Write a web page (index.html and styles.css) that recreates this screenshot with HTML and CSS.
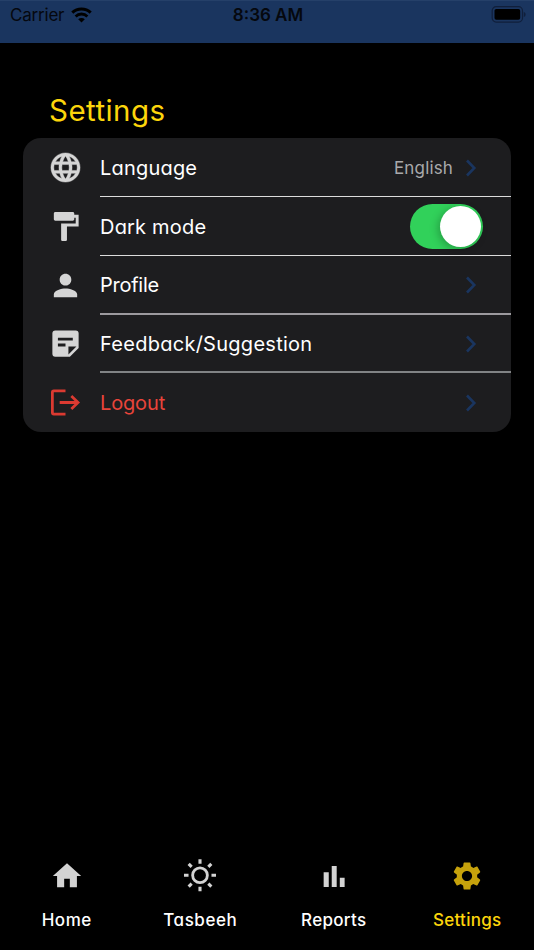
FILE: index.html
```html
<!DOCTYPE html>
<html lang="en">
<head>
    <meta charset="UTF-8">
    <meta name="viewport" content="width=device-width, initial-scale=1.0">
    <title>Settings</title>
    <link rel="stylesheet" href="styles.css">
</head>
<body>
    <header class="status-bar">
        <div class="carrier">
            <span class="carrier-name">Carrier</span>
            <svg class="wifi" viewBox="0 0 21 16">
                <path d="M1.3 5.7a13.2 13.2 0 0 1 18.4 0" fill="none" stroke="#000" stroke-width="3"/>
                <path d="M4.6 9.4a8.4 8.4 0 0 1 11.8 0" fill="none" stroke="#000" stroke-width="2.8"/>
                <path d="M10.5 15.6 7.2 12.3a4.7 4.7 0 0 1 6.6 0z"/>
            </svg>
        </div>
        <div class="time">8:36 AM</div>
        <svg class="battery" viewBox="0 0 35 17">
            <rect x="1.2" y=".7" width="30.3" height="15.4" rx="4" fill="none" stroke="#101f3b" stroke-width="1.2"/>
            <rect x="3.500" y="3" width="25.700" height="10.800" rx="1.800"/>
            <path d="M32.800 6v5c1.400-.4 1.800-1.400 1.800-2.500s-.4-2.100-1.800-2.500z" fill="#101f3b"/>
        </svg>
    </header>

    <main class="content">
        <h1>Settings</h1>
        <div class="card">
            <div class="row">
                <svg class="icon" viewBox="0 0 24 24"><path d="M11.99 2C6.470 2 2 6.480 2 12s4.470 10 9.990 10C17.520 22 22 17.520 22 12S17.520 2 11.990 2zm6.930 6h-2.950c-.32-1.250-.78-2.450-1.380-3.560 1.840.63 3.370 1.910 4.330 3.560zM12 4.040c.83 1.200 1.480 2.530 1.910 3.960h-3.820c.43-1.430 1.080-2.760 1.910-3.960zM4.260 14C4.100 13.360 4 12.690 4 12s.1-1.360.26-2h3.380c-.08.66-.14 1.320-.14 2s.06 1.340.14 2H4.260zm.82 2h2.950c.32 1.250.78 2.450 1.380 3.560-1.840-.63-3.370-1.900-4.330-3.560zm2.950-8H5.080c.96-1.660 2.490-2.930 4.330-3.560C8.810 5.550 8.350 6.750 8.030 8zM12 19.960c-.83-1.200-1.480-2.530-1.910-3.960h3.820c-.43 1.430-1.080 2.760-1.910 3.960zM14.340 14H9.660c-.09-.66-.16-1.320-.16-2s.07-1.350.16-2h4.680c.09.65.16 1.320.16 2s-.07 1.340-.16 2zm.25 5.560c.6-1.110 1.060-2.310 1.380-3.560h2.950c-.96 1.650-2.490 2.930-4.330 3.560zM16.360 14c.08-.66.14-1.320.14-2s-.06-1.340-.14-2h3.380c.16.64.26 1.310.26 2s-.1 1.360-.26 2h-3.380z" stroke="#d5d5d5" stroke-width=".3"/></svg>
                <div class="row-body">
                    <span class="label language">Language</span>
                    <span class="value">English</span>
                    <svg class="chevron" viewBox="0 0 12 18"><path d="m2 1.500 7.300 7.500-7.300 7.500"/></svg>
                </div>
            </div>
            <div class="row">
                <svg class="icon" viewBox="0 0 24 24"><path d="M18 4V3c0-.55-.45-1-1-1H5c-.55 0-1 .45-1 1v4c0 .55.45 1 1 1h12c.55 0 1-.45 1-1V6h1v4H9v11c0 .55.45 1 1 1h2c.55 0 1-.45 1-1v-9h8V4h-3z"/></svg>
                <div class="row-body">
                    <span class="label dark-mode">Dark mode</span>
                    <div class="toggle"><div class="knob"></div></div>
                </div>
            </div>
            <div class="row">
                <svg class="icon" viewBox="0 0 24 24"><path d="M12 12c2.210 0 4-1.790 4-4s-1.790-4-4-4-4 1.790-4 4 1.790 4 4 4zm0 2c-2.670 0-8 1.340-8 4v2h16v-2c0-2.660-5.330-4-8-4z"/></svg>
                <div class="row-body thick">
                    <span class="label profile">Profile</span>
                    <svg class="chevron" viewBox="0 0 12 18"><path d="m2 1.500 7.300 7.500-7.300 7.500"/></svg>
                </div>
            </div>
            <div class="row">
                <svg class="icon" viewBox="0 0 24 24">
                    <path fill-rule="evenodd" d="M5 3h14a2 2 0 0 1 2 2v10l-6 6H5a2 2 0 0 1-2-2V5a2 2 0 0 1 2-2zm1.800 5v2H17V8zm0 4v2H12v-2zM14 19.500l5.500-5.500H14z"/>
                </svg>
                <div class="row-body thick dim">
                    <span class="label feedback">Feedback/Suggestion</span>
                    <svg class="chevron" viewBox="0 0 12 18"><path d="m2 1.500 7.300 7.500-7.300 7.500"/></svg>
                </div>
            </div>
            <div class="row danger">
                <svg class="icon" viewBox="0 0 24 24">
                    <path d="M12 4.100H4a1 1 0 0 0-1 1v13.800a1 1 0 0 0 1 1h8M8 12h12.500M16 7.500l4.600 4.500-4.600 4.500" fill="none" stroke="#db3a31" stroke-width="1.900"/>
                </svg>
                <div class="row-body">
                    <span class="label logout">Logout</span>
                    <svg class="chevron" viewBox="0 0 12 18"><path d="m2 1.500 7.300 7.500-7.300 7.500"/></svg>
                </div>
            </div>
        </div>
    </main>

    <nav class="tab-bar">
        <div class="tab">
            <svg viewBox="0 0 24 24"><path d="M10 20v-6h4v6h5v-8h3L12 3 2 12h3v8z"/></svg>
            <span class="tab-home">Home</span>
        </div>
        <div class="tab">
            <svg viewBox="0 0 24 24">
                <circle cx="12" cy="11.500" r="5.200" fill="none" stroke="#d3d3d3" stroke-width="2"/>
                <path d="M12 .2v3.200M12 19.600v3.200M.7 11.500h3.200M20.100 11.500h3.200M4 3.500l2.100 2.100M17.900 17.400l2.100 2.100M4 19.500l2.100-2.100M17.900 5.600l2.100-2.100" fill="none" stroke="#d3d3d3" stroke-width="2.200"/>
            </svg>
            <span class="tab-tasbeeh">Tasbeeh</span>
        </div>
        <div class="tab">
            <svg viewBox="0 0 24 24"><path d="M4.700 9.300h3.600v10.400H4.700zM10.400 5h3.500v14.700h-3.500zM16.100 13.200h3.400v6.500h-3.400z"/></svg>
            <span class="tab-reports">Reports</span>
        </div>
        <div class="tab active">
            <svg viewBox="0 0 24 24"><path d="M19.140 12.940c.04-.3.06-.61.06-.94 0-.32-.02-.64-.07-.94l2.030-1.580c.18-.14.23-.41.12-.61l-1.920-3.320c-.12-.22-.37-.29-.59-.22l-2.390.96c-.5-.38-1.030-.7-1.620-.94l-.36-2.540c-.04-.24-.24-.41-.48-.41h-3.840c-.24 0-.43.17-.47.41l-.36 2.540c-.59.24-1.130.57-1.620.94l-2.390-.96c-.22-.08-.47 0-.59.22L2.740 8.870c-.12.21-.08.47.12.61l2.030 1.580c-.05.3-.09.63-.09.94s.02.64.07.94l-2.030 1.580c-.18.14-.23.41-.12.61l1.920 3.320c.12.22.37.29.59.22l2.390-.96c.5.38 1.030.7 1.620.94l.36 2.540c.05.24.24.41.48.41h3.840c.24 0 .44-.17.47-.41l.36-2.540c.59-.24 1.130-.56 1.620-.94l2.390.96c.22.08.47 0 .59-.22l1.920-3.320c.12-.22.07-.47-.12-.61l-2.010-1.580zM12 15.600c-1.980 0-3.600-1.620-3.600-3.600s1.620-3.600 3.600-3.600 3.600 1.620 3.600 3.600-1.620 3.600-3.600 3.600z"/></svg>
            <span class="tab-settings">Settings</span>
        </div>
    </nav>
</body>
</html>
```

FILE: styles.css
```css
* {
    box-sizing: border-box;
}

body {
    margin: 0;
    height: 950px;
    display: flex;
    flex-direction: column;
    background-color: #000;
    color: #fff;
    font-family: Inter, "Open Sans", sans-serif;
    font-feature-settings: "cv11";
    overflow: hidden;
}

.status-bar {
    height: 43px;
    padding: 0 8px 15px 10px;
    display: grid;
    grid-template-columns: 1fr auto 1fr;
    align-items: center;
    background-color: #1a355f;
    border-top: 1px solid #254069;
    color: #05080e;
    font-size: 17px;
    font-feature-settings: normal;
}

.carrier {
    display: flex;
    align-items: center;
    gap: 7px;
}

.carrier-name {
    letter-spacing: -0.2px;
}

.wifi {
    width: 21px;
    height: 16px;
}

.time {
    font-weight: 600;
}

.battery {
    width: 35px;
    height: 17px;
    justify-self: end;
}

.content {
    flex: 1;
    padding: 45px 23px 0;
}

h1 {
    margin: 0 0 6px 26px;
    height: 44px;
    line-height: 44px;
    font-size: 29.5px;
    font-weight: 400;
    letter-spacing: 0.45px;
    color: #fcd50b;
}

.card {
    height: 294px;
    padding-top: 0.5px;
    border-radius: 18px;
    background-color: #1d1d1f;
    overflow: hidden;
}

.row {
    height: 58.7px;
    display: flex;
    align-items: center;
}

.icon {
    width: 35px;
    height: 35px;
    margin: 0 17px 0 25px;
    fill: #d5d5d5;
}

.row-body {
    flex: 1;
    height: 100%;
    display: flex;
    align-items: center;
    padding: 2px 34px 0 0;
    border-bottom: 1px solid #dcdcdc;
}

.row-body.thick {
    border-bottom: 2px solid #9c9a9e;
}

.row-body.dim {
    border-bottom-color: #818385;
}

.danger .row-body {
    padding-top: 0;
    border-bottom: none;
}

.label {
    flex: 1;
    font-size: 20px;
    white-space: nowrap;
}

.language,
.dark-mode {
    letter-spacing: 0.2px;
}

.profile {
    letter-spacing: -0.25px;
}

.feedback {
    letter-spacing: 0.27px;
}

.logout {
    letter-spacing: -0.15px;
}

.danger .label {
    color: #e8443a;
}

.value {
    margin-right: 12px;
    font-size: 17px;
    letter-spacing: 0.15px;
    color: #a9a9ab;
}

.chevron {
    width: 12px;
    height: 18px;
    fill: none;
    stroke: #1a355f;
    stroke-width: 2.6;
}

.toggle {
    width: 73px;
    height: 45px;
    margin: -2px -6px 0 0;
    padding: 2px;
    display: flex;
    justify-content: flex-end;
    border-radius: 23px;
    background-color: #31d15a;
}

.knob {
    width: 41px;
    height: 41px;
    border-radius: 50%;
    background-color: #fff;
    box-shadow: -2px 2px 8px rgba(0, 0, 0, 0.25);
}

.tab-bar {
    height: 94px;
    display: grid;
    grid-template-columns: repeat(4, 1fr);
}

.tab {
    display: flex;
    flex-direction: column;
    align-items: center;
    gap: 15px;
    padding-top: 3px;
    font-size: 17px;
    font-weight: 500;
    line-height: 25px;
}

.tab svg {
    width: 34px;
    height: 34px;
    fill: #d3d3d3;
}

.tab-home,
.tab-tasbeeh {
    letter-spacing: 0.55px;
}

.tab-reports,
.tab-settings {
    letter-spacing: 0.3px;
}

.tab.active {
    color: #fcd50b;
}

.tab.active svg {
    fill: #c6a20c;
}
```
